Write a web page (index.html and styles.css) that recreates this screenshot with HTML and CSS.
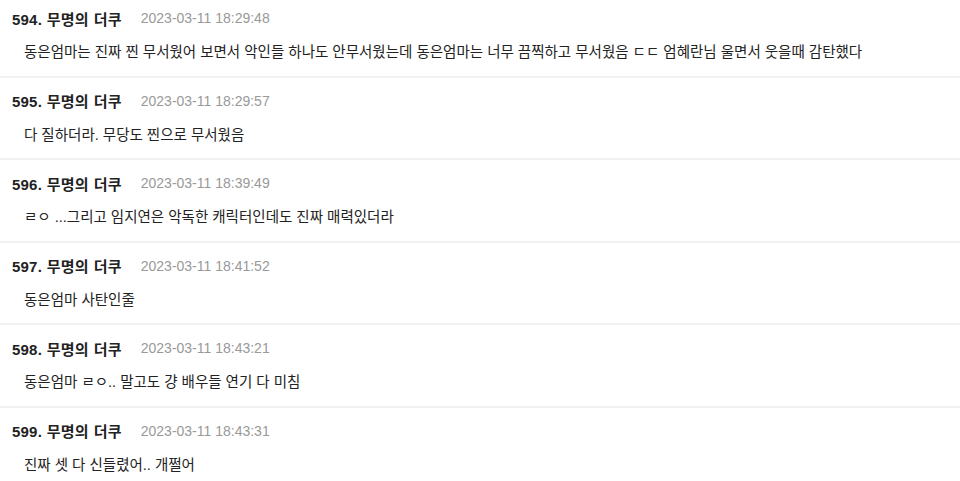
FILE: index.html
```html
<!DOCTYPE html>
<html lang="ko">
<head>
<meta charset="utf-8">
<link rel="stylesheet" href="styles.css">
</head>
<body>
<ul class="comments">
  <li class="comment">
    <div class="meta"><span class="author">594. 무명의 더쿠</span><span class="date">2023-03-11 18:29:48</span></div>
    <p class="text">동은엄마는 진짜 찐 무서웠어 보면서 악인들 하나도 안무서웠는데 동은엄마는 너무 끔찍하고 무서웠음 ㄷㄷ 엄혜란님 울면서 웃을때 감탄했다</p>
  </li>
  <li class="comment">
    <div class="meta"><span class="author">595. 무명의 더쿠</span><span class="date">2023-03-11 18:29:57</span></div>
    <p class="text">다 질하더라. 무당도 찐으로 무서웠음</p>
  </li>
  <li class="comment">
    <div class="meta"><span class="author">596. 무명의 더쿠</span><span class="date">2023-03-11 18:39:49</span></div>
    <p class="text">ㄹㅇ ...그리고 임지연은 악독한 캐릭터인데도 진짜 매력있더라</p>
  </li>
  <li class="comment">
    <div class="meta"><span class="author">597. 무명의 더쿠</span><span class="date">2023-03-11 18:41:52</span></div>
    <p class="text">동은엄마 사탄인줄</p>
  </li>
  <li class="comment">
    <div class="meta"><span class="author">598. 무명의 더쿠</span><span class="date">2023-03-11 18:43:21</span></div>
    <p class="text">동은엄마 ㄹㅇ.. 말고도 걍 배우들 연기 다 미침</p>
  </li>
  <li class="comment">
    <div class="meta"><span class="author">599. 무명의 더쿠</span><span class="date">2023-03-11 18:43:31</span></div>
    <p class="text">진짜 셋 다 신들렸어.. 개쩔어</p>
  </li>
</ul>
</body>
</html>
```
FILE: styles.css
```css
html, body {
  margin: 0;
  padding: 0;
  background: #fff;
}
body {
  font-family: "Liberation Sans", "Noto Sans CJK KR", sans-serif;
  color: #222;
  overflow: hidden;
}
.comments {
  list-style: none;
  margin: 0;
  padding: 0;
}
.comment {
  padding: 13px 12px 13.5px;
  border-bottom: 2px solid #f1f1f1;
}
.comment:first-child {
  padding-top: 8px;
}
.meta {
  display: flex;
  align-items: center;
  gap: 19px;
  height: 20px;
}
.author {
  font-size: 15px;
  font-weight: bold;
  letter-spacing: 0.2px;
  word-spacing: 0.5px;
  color: #222;
}
.date {
  font-size: 14px;
  color: #999;
}
.text {
  margin: 14px 0 0 12px;
  font-size: 14.5px;
  line-height: 20px;
  color: #222;
}
```
